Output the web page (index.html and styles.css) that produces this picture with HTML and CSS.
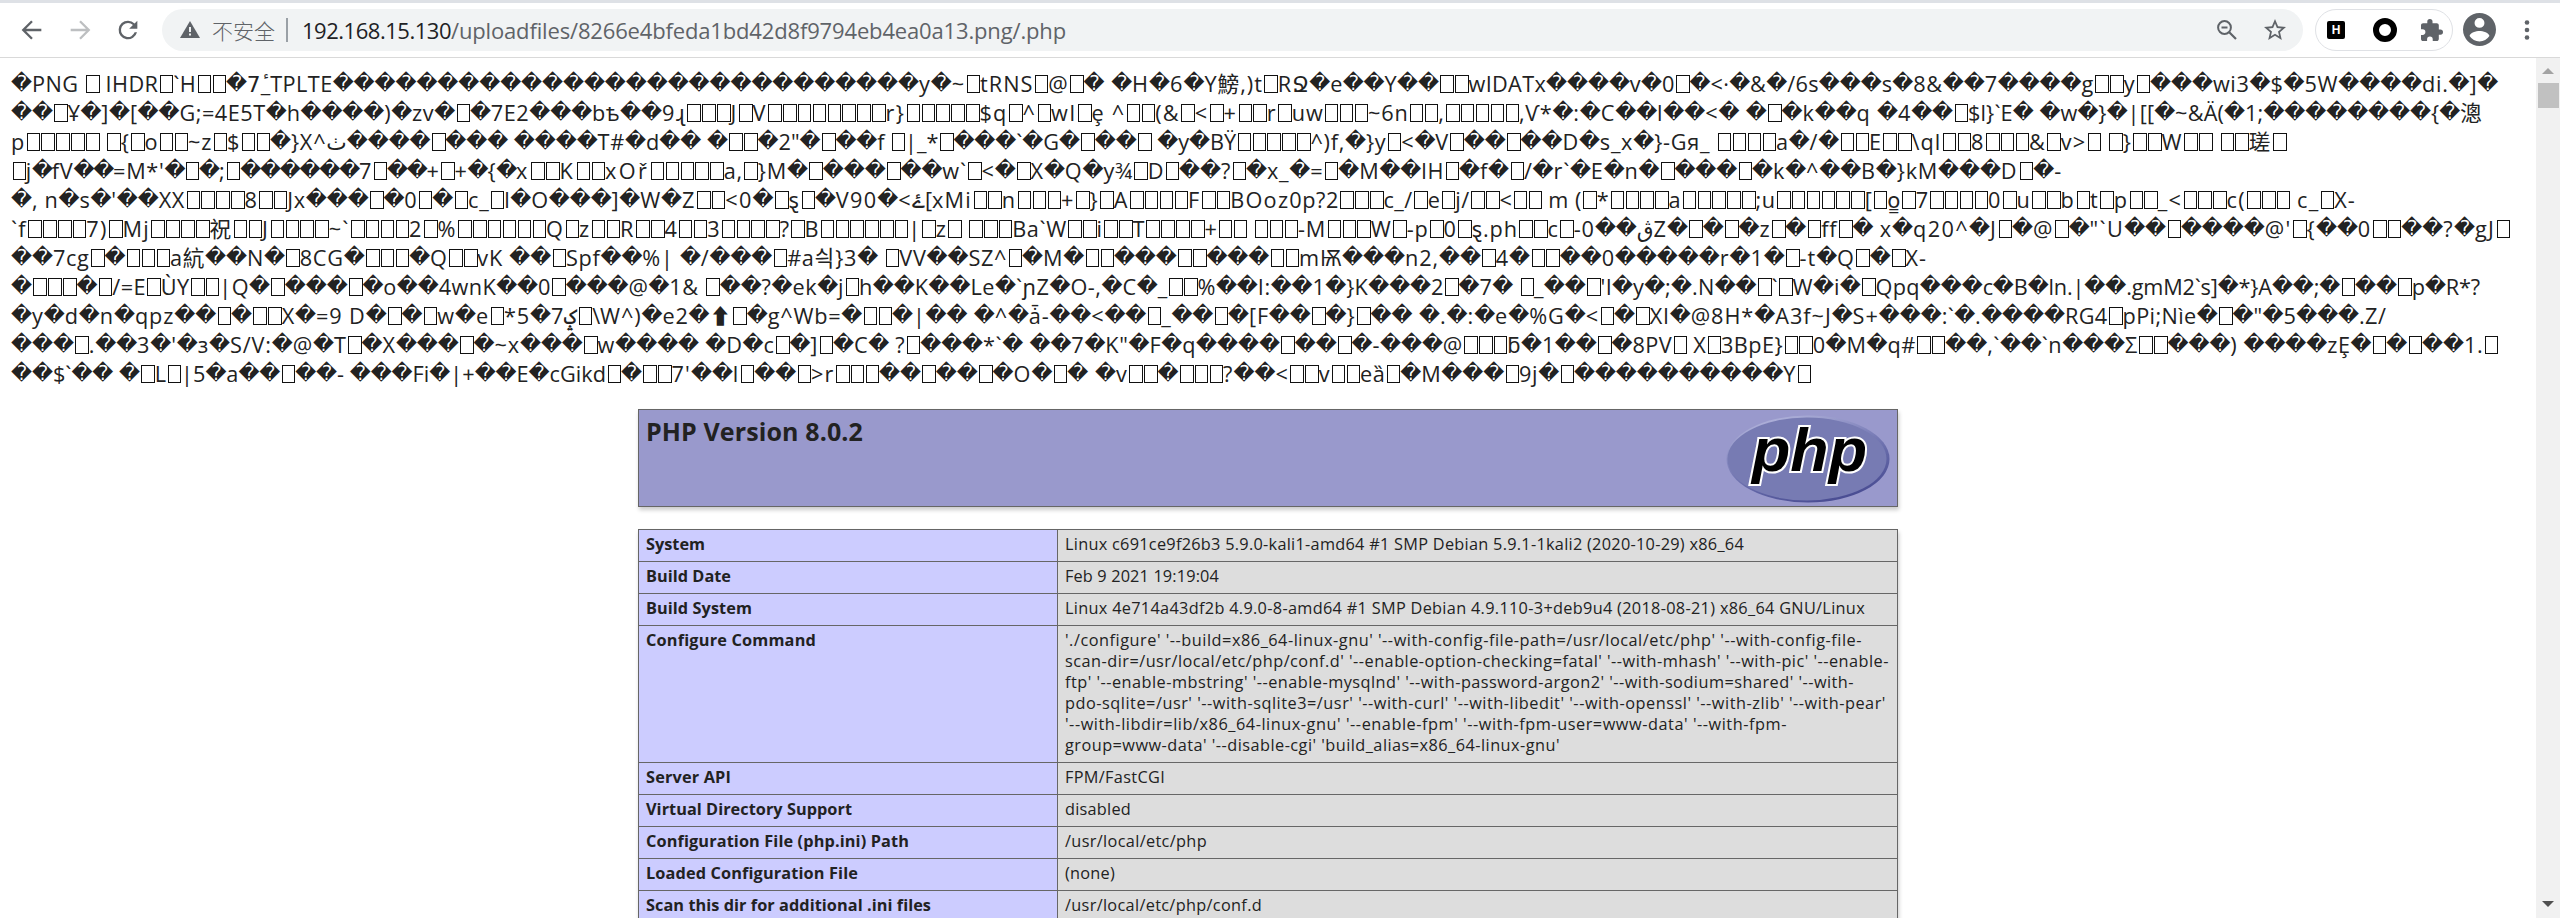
FILE: index.html
```html
<!DOCTYPE html>
<html lang="en">
<head>
<meta charset="utf-8">
<title>PHP 8.0.2 - phpinfo()</title>
<link rel="stylesheet" href="styles.css">
</head>
<body>
<div class="tabstrip"></div>
<header class="toolbar">
  <div class="nav">
    <svg class="nav-icon" viewBox="0 0 24 24" width="28" height="28"><path d="M20 12H5M12 4.5 4.5 12l7.5 7.500" fill="none" stroke="#5f6368" stroke-width="2"/></svg>
    <svg class="nav-icon" viewBox="0 0 24 24" width="28" height="28"><path d="M4 12h15M12 4.500 19.500 12 12 19.500" fill="none" stroke="#bdbfc1" stroke-width="2"/></svg>
    <svg class="nav-icon" viewBox="0 0 24 24" width="28" height="28"><path d="M17.650 6.350A7.960 7.960 0 0 0 12 4a8 8 0 1 0 7.730 10h-2.080A6 6 0 1 1 12 6c1.660 0 3.140.690 4.220 1.780L13 11h7V4z" fill="#5f6368"/></svg>
  </div>
  <div class="omnibox">
    <svg class="warn" viewBox="0 0 20 17" width="20" height="17"><path d="M10 0 20 17H0z" fill="#5f6368"/><path d="M9 6h2v5H9zM9 12.500h2v2H9z" fill="#f1f3f4"/></svg>
    <span class="insecure">不安全</span>
    <span class="sep"></span>
    <span class="url"><span class="host" data-w="149">192.168.15.130</span><span class="path" data-w="615">/uploadfiles/8266e4bfeda1bd42d8f9794eb4ea0a13.png/.php</span></span>
    <svg class="zoom-icon" viewBox="0 0 20 20" width="20" height="20"><circle cx="7.500" cy="7.500" r="6.400" fill="none" stroke="#5f6368" stroke-width="2"/><path d="M4.500 7.500h6M12 12l7 7" fill="none" stroke="#5f6368" stroke-width="2.200"/></svg>
    <svg class="star" viewBox="2 2 20 19" width="22" height="21"><path d="M22 9.240l-7.190-.620L12 2 9.190 8.630 2 9.240l5.460 4.730L5.820 21 12 17.270 18.180 21l-1.630-7.030zM12 15.400l-3.760 2.270 1-4.280-3.320-2.880 4.380-.380L12 6.100l1.710 4.040 4.380.380-3.320 2.880 1 4.280z" fill="#5f6368"/></svg>
  </div>
  <div class="extensions">
    <span class="ext-h">H</span>
    <span class="ext-o"></span>
    <svg viewBox="2 1 21 21" width="22" height="22"><path d="M20.500 11H19V7c0-1.100-.900-2-2-2h-4V3.500a2.500 2.500 0 0 0-5 0V5H4c-1.100 0-2 .900-2 2v3.800h1.500a2.700 2.700 0 0 1 0 5.400H2V20c0 1.100.900 2 2 2h3.800v-1.500a2.700 2.700 0 0 1 5.400 0V22H17c1.100 0 2-.900 2-2v-4h1.500a2.500 2.500 0 0 0 0-5z" fill="#5f6368"/></svg>
  </div>
  <svg class="avatar" viewBox="2 2 20 20" width="33" height="33"><path d="M12 2a10 10 0 1 0 0 20 10 10 0 0 0 0-20zm0 3a3 3 0 1 1 0 6 3 3 0 0 1 0-6zm0 14.200a7.200 7.200 0 0 1-6-3.220c.030-1.990 4-3.080 6-3.080s5.970 1.090 6 3.080a7.200 7.200 0 0 1-6 3.220z" fill="#5f6368"/></svg>
  <svg class="menu" viewBox="0 0 6 20" width="6" height="20"><g fill="#5f6368"><circle cx="3" cy="2.500" r="2.300"/><circle cx="3" cy="10" r="2.300"/><circle cx="3" cy="17.500" r="2.300"/></g></svg>
</header>
<div class="viewport">
  <main class="page">
    <div class="dump" id="dump"></div>
    <section class="banner">
      <h1><span data-w="217">PHP Version 8.0.2</span></h1>
      <svg class="logo" viewBox="0 0 164 88" width="164" height="88">
        <defs>
          <linearGradient id="rim" x1="0.250" y1="0" x2="0.750" y2="1"><stop offset="0" stop-color="#b3b5dc"/><stop offset="0.350" stop-color="#8487be"/><stop offset="0.650" stop-color="#6266a6"/><stop offset="1" stop-color="#45488f"/></linearGradient>
        </defs>
        <ellipse cx="82" cy="44" rx="81.500" ry="43.500" fill="url(#rim)"/>
        <ellipse cx="81" cy="44" rx="79.500" ry="41.500" fill="#777bb3"/>
        <text class="logo-text" x="26" y="56" textLength="115" lengthAdjust="spacingAndGlyphs">php</text>
      </svg>
    </section>
    <table class="info">
      <tr><th><span data-w="59">System</span></th><td><span data-w="679">Linux c691ce9f26b3 5.9.0-kali1-amd64 #1 SMP Debian 5.9.1-1kali2 (2020-10-29) x86_64</span></td></tr>
      <tr><th><span data-w="85">Build Date</span></th><td><span data-w="154">Feb 9 2021 19:19:04</span></td></tr>
      <tr><th><span data-w="106">Build System</span></th><td><span data-w="800">Linux 4e714a43df2b 4.9.0-8-amd64 #1 SMP Debian 4.9.110-3+deb9u4 (2018-08-21) x86_64 GNU/Linux</span></td></tr>
      <tr><th><span data-w="170">Configure Command</span></th><td><span data-w="797">'./configure' '--build=x86_64-linux-gnu' '--with-config-file-path=/usr/local/etc/php' '--with-config-file-</span><br><span data-w="824">scan-dir=/usr/local/etc/php/conf.d' '--enable-option-checking=fatal' '--with-mhash' '--with-pic' '--enable-</span><br><span data-w="789">ftp' '--enable-mbstring' '--enable-mysqlnd' '--with-password-argon2' '--with-sodium=shared' '--with-</span><br><span data-w="821">pdo-sqlite=/usr' '--with-sqlite3=/usr' '--with-curl' '--with-libedit' '--with-openssl' '--with-zlib' '--with-pear'</span><br><span data-w="722">'--with-libdir=lib/x86_64-linux-gnu' '--enable-fpm' '--with-fpm-user=www-data' '--with-fpm-</span><br><span data-w="495">group=www-data' '--disable-cgi' 'build_alias=x86_64-linux-gnu'</span></td></tr>
      <tr><th><span data-w="85">Server API</span></th><td><span data-w="100">FPM/FastCGI</span></td></tr>
      <tr><th><span data-w="206">Virtual Directory Support</span></th><td><span data-w="66">disabled</span></td></tr>
      <tr><th><span data-w="263">Configuration File (php.ini) Path</span></th><td><span data-w="142">/usr/local/etc/php</span></td></tr>
      <tr><th><span data-w="212">Loaded Configuration File</span></th><td><span data-w="50">(none)</span></td></tr>
      <tr><th><span data-w="285">Scan this dir for additional .ini files</span></th><td><span data-w="197">/usr/local/etc/php/conf.d</span></td></tr>
    </table>
  </main>
  <aside class="scrollbar">
    <span class="arrow-up"></span>
    <span class="thumb"></span>
    <span class="arrow-down"></span>
  </aside>
</div>
<script src="dump.js"></script>
</body>
</html>
```

FILE: styles.css
```css
* { box-sizing: border-box; }
html, body { margin: 0; height: 100%; }
body {
  display: flex;
  flex-direction: column;
  overflow: hidden;
  background: #fff;
  color: #222;
  font-family: "Open Sans", "Noto Sans", "Noto Sans CJK SC", "DejaVu Sans", sans-serif;
}
svg { display: block; flex: none; }

.tabstrip { flex: none; height: 3px; background: #dee1e6; }
.toolbar {
  flex: none;
  display: flex;
  align-items: center;
  height: 55px;
  padding: 0 30px 1px 18px;
  border-bottom: 1px solid #d9d9d9;
}
.nav { display: flex; gap: 20px; width: 144px; }
.omnibox {
  flex: none;
  display: flex;
  align-items: center;
  width: 2141px;
  height: 42px;
  padding: 0 17px 0 18px;
  border-radius: 21px;
  background: #f1f3f4;
  font-size: 22px;
  white-space: nowrap;
}
.insecure {
  width: 64px;
  margin-left: 12px;
  font-family: "Noto Sans CJK SC", sans-serif;
  font-size: 21px;
  font-weight: 300;
  line-height: 30px;
  color: #5f6368;
}
.sep { width: 2px; height: 24px; margin-left: 10px; background: #9aa0a6; }
.url { flex: 1; margin-left: 14px; color: #5f6368; line-height: 30px; }
.host { color: #202124; }
.zoom-icon { margin-right: 27px; }
.extensions {
  flex: none;
  display: flex;
  align-items: center;
  justify-content: space-between;
  width: 138px;
  height: 42px;
  margin-left: 12px;
  padding: 0 9px 0 11px;
  border: 1px solid #dfe1e5;
  border-radius: 21px;
}
.ext-h {
  width: 18px;
  height: 18px;
  border-radius: 2px;
  background: #000;
  color: #fff;
  font: bold 12px/18px "Liberation Sans", sans-serif;
  text-align: center;
}
.ext-o { width: 24px; height: 24px; margin-left: 4px; border: 6px solid #000; border-radius: 50%; }
.avatar { margin-left: 10px; }
.menu { margin-left: auto; }

.viewport { flex: 1; min-height: 0; display: flex; }
.page { flex: 1; min-width: 0; overflow: hidden; }

.dump {
  height: 351px;
  padding: 11px 0 0 11px;
  font-size: 21.700px;
  line-height: 29px;
}
.line { display: flex; height: 29px; white-space: pre; }
.seg { flex: none; }
.bad, .box { display: inline-block; letter-spacing: 0; line-height: 29px; vertical-align: top; }
.bad { width: 20.950px; height: 29px; font-family: "DejaVu Sans", sans-serif; font-size: 20.500px; text-align: center; }
.narrow .bad { width: 19.800px; }
.box { width: 14.860px; height: 29px; padding: 6px 1px 0 1.500px; }
.box::before { content: ""; display: block; width: 11.500px; height: 16px; border: 1px solid #111; }

.banner {
  display: flex;
  justify-content: space-between;
  width: 1260px;
  height: 98px;
  margin: 0 auto;
  padding: 5px 7px 0;
  border: 1px solid #666;
  background: #99c;
  box-shadow: 1px 3px 4px #ccc;
}
h1 { margin: 0; font-size: 25px; line-height: 33px; white-space: nowrap; }
.logo-text {
  font: italic bold 62px "Liberation Sans", sans-serif;
  fill: #000;
  stroke: #fff;
  stroke-width: 4px;
  paint-order: stroke;
}
.info {
  width: 1260px;
  margin: 22px auto 0;
  table-layout: fixed;
  border-collapse: collapse;
  box-shadow: 1px 3px 4px #ccc;
  font-size: 16.300px;
  line-height: 21px;
}
.info th, .info td {
  padding: 4px 6px 6px 7px;
  border: 1px solid #666;
  text-align: left;
  vertical-align: top;
  white-space: nowrap;
}
.info th { width: 419px; background: #ccf; font-weight: bold; }
.info td { background: #ddd; }

.scrollbar {
  flex: none;
  display: flex;
  flex-direction: column;
  align-items: center;
  width: 24px;
  padding: 10px 0 11px;
  background: #f1f1f1;
}
.arrow-up { border: 6px solid transparent; border-top: 0; border-bottom-color: #a3a3a3; }
.thumb { width: 21px; height: 25px; margin-top: 9px; background: #c1c1c1; }
.arrow-down { margin-top: auto; border: 6px solid transparent; border-bottom: 0; border-top-color: #505050; }
```

FILE: dump.js
```js
// Each line is a list of [right edge, text] runs; the first run starts at LEFT.
const LEFT = 11;
const lines = [
  [[334, "�PNG ▯ IHDR▯`H▯▯�7ٔ_TPLTE"], [920.7, "����������������������������"], [1294, "y�~▯tRNS▯@▯� �H�6�Y鰟,)t▯R"], [1915, "Ջ�e��Y��▯▯wIDATx����v�0▯�<·�&�/6s���s�"], [2500, "8&��7����g▯▯y▯���wi3�$�5W����di.�]�"]],
  [[662, "��▯Ұ�]�[��G;=4E5T�h����)�zv�▯�7E2���bѣ��"], [1291.8, "9ɻ▯▯▯J▯V▯▯▯▯▯▯▯▯r}▯▯▯▯▯$q▯^▯wI▯ȩ ^▯▯(&▯<▯+▯▯r▯"], [1953, "uw▯▯▯~6n▯▯,▯▯▯▯▯,Ѵ*�:�C��l��<� �▯�k��q �4��"], [2482, "▯$l}`E� �w�}�|[[�~&Ä(�1;��������{�漗"]],
  [[647.6, "p▯▯▯▯▯ ▯{▯o▯▯~z▯$▯▯�}X^ٺ����▯��� ����T#�"], [1312, "d�� �▯▯�2\"�▯��f ▯|_*▯���`�G�▯��▯ �y�BŸ▯▯▯▯▯"], [1913, "^)f,�}y▯<�V▯��▯��D�s_x�}-Gя_ ▯▯▯▯a�/�▯▯E▯▯"], [2288, "\\ql▯▯8▯▯▯&▯v>▯ ▯}▯▯W▯▯ ▯▯瑳▯"]],
  [[516, "▯j�fV��=M*'�▯�;▯������7▯��+▯+�{�", "narrow"], [649.3, "x▯▯K▯▯xOř"], [1279, "▯▯▯▯▯a,▯}M�▯���▯��w`▯<�▯X�Q�y¾▯D▯��?▯�x"], [1938, "_�=▯�M��lH▯�f�▯/�r`�E�n�▯���▯�k�^��B�}kM"], [2063, "���D▯�-"]],
  [[661, "�, n�s�'��XX▯▯▯▯8▯▯Jx���▯�0▯�▯c_▯l�O���]�W"], [1291.8, "�Z▯▯<0�▯ȿ▯�V90�<ۓ[xMi▯▯n▯▯▯+▯}▯A▯▯▯▯F▯▯BOoz"], [1931.6, "0p?2▯▯▯c_/▯e▯j/▯▯<▯▯ m (▯*▯▯▯▯a▯▯▯▯▯;u▯▯▯▯▯▯[▯o̳▯7"], [2359, "▯▯▯▯0▯u▯▯b▯t▯p▯▯_<▯▯▯c(▯▯▯ c_▯X-"]],
  [[664.4, "`f▯▯▯▯7)▯Mj▯▯▯▯祝▯▯J▯▯▯▯~`▯▯▯▯2▯%▯▯▯▯▯▯Q▯z▯▯R▯▯"], [1298, "4▯▯3▯▯▯▯?▯B▯▯▯▯▯▯|▯z▯ ▯▯▯Ba`W▯▯i▯▯T▯▯▯▯+▯▯ ▯▯▯"], [1913.9, "-M▯▯▯W▯-p▯0▯ȿ.ph▯▯c▯-0��ڨZ�▯�▯�z▯�▯ff▯� x�"], [2511, "q20^�J▯�@▯�\"`U��▯����@'▯{��0▯▯��?�gJ▯"]],
  [[661, "��7cg▯�▯▯▯a䋁��N�▯8CG�▯▯▯�Q▯▯vK ��▯Spf��%"], [1299, "| �/���▯#a싁}3� ▯VV��SZ^▯�M�▯▯���▯▯���▯▯"], [1927, "mѬ���n2,��▯4�▯▯��0�����r�1�▯-t�Q▯�▯X-"]],
  [[648.4, "�▯▯▯�▯/=E▯ÙY▯▯|Q�▯���▯�o��4wnK��0▯���@"], [1312.5, "�1& ▯��?�ek�j▯h��K��Le�`ɲZ�O-,�C�_▯▯%��I:��"], [1919.8, "1�}K���2▯�7� ▯_��▯'I�y�;�.N��▯`▯W�i�▯Qpq"], [2480, "���c�B�ln.|��.gmM2`s]�*}A��;�▯��▯p�R*?"]],
  [[643.4, "�y�d�n�qpz��▯�▯▯X�=9 D�▯�▯w�e▯*5�7ݤ▯\\W^)"], [1312.5, "�e2�⬆▯�g^Wb=�▯▯�|�� �^�ǡ-��<��▯_��▯�[F��"], [1880.6, "▯�}▯�� �.�:�e�%G�<▯�▯Xl�@8H*�A3f~J�S+"], [2388, "���:`�.����RG4▯pPi;Nìe�▯�\"�5���.Z/"]],
  [[699, "���▯.��3�'�з�S/V:�@�T▯�X���▯�~x���▯w����"], [1380, " �D�c▯�]▯�C� ?▯���*`� ��7�K\"�F�q����▯��▯�-"], [1915.6, "���@▯▯▯ƃ�1��▯�8PV▯ X▯3BpE}▯▯0�M�q#"], [2498, "▯▯��,`��`n���Σ▯▯���) ����zȨ�▯�▯��1.▯"]],
  [[671.6, "��$`�� �▯L▯|5�a��▯��- ���Fi�|+��E�cGikd▯�▯▯"], [1289, "7'��l▯��▯>r▯▯▯��▯��▯�O�▯� �v▯▯�▯▯▯?��<"], [1811, "▯▯v▯▯eȁ▯�M���▯9j�▯����������Y▯"]]
];

// Adjusts tracking so that the run occupies the given width.
function fit(el, width, count) {
  if (!count) return;
  const spacing = (width - el.getBoundingClientRect().width) / count;
  el.style.letterSpacing = spacing.toFixed(3) + "px";
}

const dump = document.getElementById("dump");
for (const runs of lines) {
  const line = document.createElement("div");
  line.className = "line";
  dump.append(line);
  let x = LEFT;
  for (const [end, text, kind] of runs) {
    const seg = document.createElement("span");
    seg.className = "seg" + (kind ? " " + kind : "");
    seg.dir = "ltr";
    for (const part of text.match(/�|▯|[^�▯]+/gu)) {
      if (part === "�" || part === "▯") {
        const mark = document.createElement("span");
        mark.className = part === "�" ? "bad" : "box";
        if (part === "�") mark.textContent = part;
        seg.append(mark);
      } else {
        seg.append(part);
      }
    }
    line.append(seg);
    fit(seg, end - x, text.replace(/[�▯]/g, "").length);
    x = end;
  }
}
for (const el of document.querySelectorAll("[data-w]")) {
  fit(el, Number(el.dataset.w), el.textContent.length);
}
```
